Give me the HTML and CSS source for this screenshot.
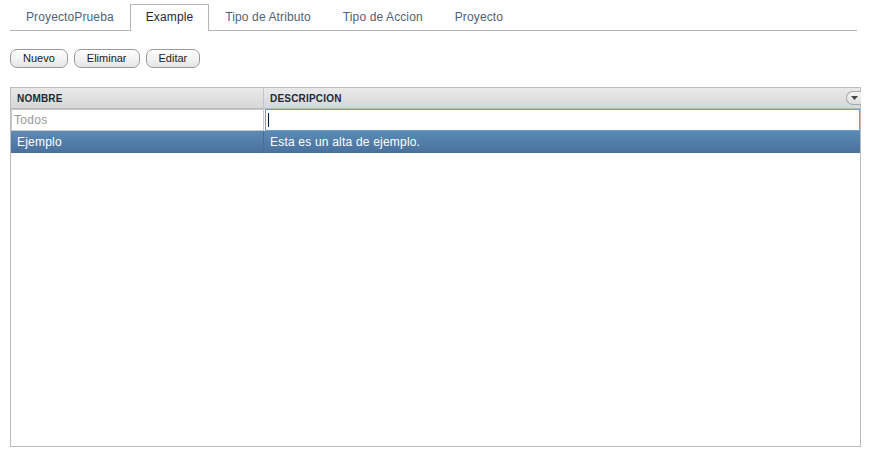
FILE: index.html
```html
<!DOCTYPE html>
<html>
<head>
<meta charset="utf-8">
<link rel="stylesheet" href="styles.css">
</head>
<body>
<div class="tabs">
  <div class="tab">ProyectoPrueba</div>
  <div class="tab active">Example</div>
  <div class="tab">Tipo de Atributo</div>
  <div class="tab">Tipo de Accion</div>
  <div class="tab">Proyecto</div>
</div>
<div class="toolbar">
  <button class="btn">Nuevo</button>
  <button class="btn">Eliminar</button>
  <button class="btn">Editar</button>
</div>
<div class="grid">
  <div class="row header">
    <div class="hcell">NOMBRE</div>
    <div class="hcell last">DESCRIPCION
      <span class="menu-btn"><svg width="7" height="4" viewBox="0 0 7 4"><path d="M0 0H7L3.5 4Z" fill="#444"/></svg></span>
    </div>
  </div>
  <div class="row filter">
    <div class="fcell"><div class="input placeholder">Todos</div></div>
    <div class="fcell"><div class="input focused"><span class="caret"></span></div></div>
  </div>
  <div class="row data selected">
    <div class="dcell">Ejemplo</div>
    <div class="dcell">Esta es un alta de ejemplo.</div>
  </div>
</div>
</body>
</html>
```
FILE: styles.css
```css
html, body {
  margin: 0;
  padding: 0;
  background: #fff;
  font-family: "Liberation Sans", Arial, sans-serif;
}

.tabs {
  display: flex;
  margin: 4px 14px 0 10px;
  border-bottom: 1px solid #b5b5b5;
  height: 26px;
}

.tab {
  padding: 0 15px;
  height: 25px;
  line-height: 25px;
  font-size: 12px;
  letter-spacing: 0.12px;
  color: #4f6378;
  border: 1px solid transparent;
  border-bottom: none;
  margin-bottom: -1px;
  background: #fff;
}

.tab.active {
  color: #2b1f33;
  border-color: #b5b5b5;
  height: 26px;
}

.toolbar {
  display: flex;
  gap: 6px;
  margin: 18px 0 0 10px;
}

.btn {
  height: 19px;
  padding: 0 12px;
  font-family: "Liberation Sans", Arial, sans-serif;
  font-size: 11px;
  color: #222;
  border: 1px solid #9a9a9a;
  border-radius: 7px;
  background: linear-gradient(#ffffff, #e6e6e6);
  line-height: 17px;
}

.grid {
  margin: 19px 0 0 10px;
  width: 849px;
  height: 358px;
  border: 1px solid #bcbcbc;
  background: #fff;
}

.row {
  display: grid;
  grid-template-columns: 253px 1fr;
}

.header {
  height: 20px;
  border-bottom: 1px solid #b9b9b9;
  background: linear-gradient(#e9e9e9, #d7d7d7);
}

.hcell {
  position: relative;
  padding-left: 6px;
  font-size: 10px;
  font-weight: bold;
  letter-spacing: 0.2px;
  color: #1d2a3c;
  line-height: 21px;
  border-right: 1px solid #c4c4c4;
}

.hcell.last {
  border-right: none;
}

.menu-btn {
  position: absolute;
  right: -1px;
  top: 3px;
  width: 14px;
  height: 12px;
  border: 1px solid #a8a8a8;
  border-right: none;
  border-radius: 7px 0 0 7px;
  background: linear-gradient(#f6f6f6, #dcdcdc);
  display: flex;
  align-items: center;
  justify-content: center;
}

.filter {
  height: 22px;
  grid-template-columns: 253px 1fr;
  column-gap: 1px;
}

.fcell {
  display: flex;
}

.input {
  flex: 1;
  height: 20px;
  border: 1px solid #c8c8c8;
  font-size: 12px;
  letter-spacing: 0.3px;
  line-height: 20px;
  padding-left: 2px;
  display: flex;
  align-items: center;
}

.input.placeholder {
  color: #9a9a9a;
}

.input.focused {
  border-color: #6a9fd6;
}

.caret {
  width: 1px;
  height: 14px;
  background: #111;
}

.data {
  height: 22px;
}

.selected {
  background: linear-gradient(#5b8bb3, #4a709e);
  color: #fff;
}

.dcell {
  font-size: 12px;
  letter-spacing: 0.2px;
  line-height: 22px;
  padding-left: 6px;
  border-right: 1px solid #4a6d95;
}

.dcell:last-child {
  border-right: none;
}
```
